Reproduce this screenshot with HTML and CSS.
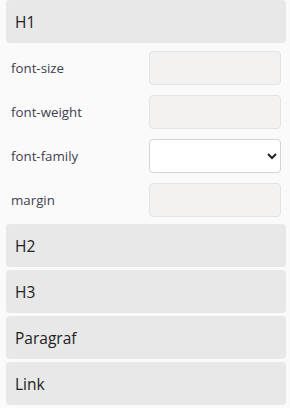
FILE: index.html
```html
<!DOCTYPE html>
<html lang="id">
<head>
  <meta charset="UTF-8" />
  <title>Gaya Teks</title>
  <link rel="stylesheet" href="styles.css">
</head>
<body>
  <div class="accordion">
    <div class="item open">
      <div class="item-head">H1</div>
      <div class="item-body">
        <div class="row">
          <label for="h1Size">font-size</label>
          <input type="text" id="h1Size" class="field" disabled />
        </div>
        <div class="row">
          <label for="h1Weight">font-weight</label>
          <input type="text" id="h1Weight" class="field" disabled />
        </div>
        <div class="row">
          <label for="h1Family">font-family</label>
          <select id="h1Family" class="field select">
            <option></option>
            <option>Arial</option>
            <option>Georgia</option>
          </select>
        </div>
        <div class="row">
          <label for="h1Margin">margin</label>
          <input type="text" id="h1Margin" class="field" disabled />
        </div>
      </div>
    </div>
    <div class="item"><div class="item-head">H2</div></div>
    <div class="item"><div class="item-head">H3</div></div>
    <div class="item"><div class="item-head">Paragraf</div></div>
    <div class="item"><div class="item-head">Link</div></div>
  </div>
</body>
</html>
```

FILE: styles.css
```css
body {
  margin: 0;
  font-family: "Open Sans", "Noto Sans", sans-serif;
  background: #fafafa;
  color: #333;
}
.accordion {
  padding: 0 4px 0 6px;
}
.item {
  margin-bottom: 3px;
}
.item-head {
  height: 43px;
  display: flex;
  align-items: center;
  padding: 0 9px;
  background: #e8e8e8;
  border-radius: 4px;
  font-size: 15.5px;
  color: #222;
}
.item-body {
  padding: 8px 5px 4px;
  display: flex;
  flex-direction: column;
  gap: 10px;
}
.row {
  display: grid;
  grid-template-columns: 138px 1fr;
  align-items: center;
}
.row label {
  font-size: 13.3px;
  color: #3f3f4f;
}
.field {
  box-sizing: border-box;
  height: 34px;
  width: 100%;
  margin: 0;
  border: 1px solid #e4e4e4;
  border-radius: 4px;
  background: #f3f2f1;
  font-family: inherit;
  font-size: 13px;
}
.field.select {
  background: #fff;
  border-color: #d4d4d4;
  padding: 0 6px;
  color: #222;
}
```
